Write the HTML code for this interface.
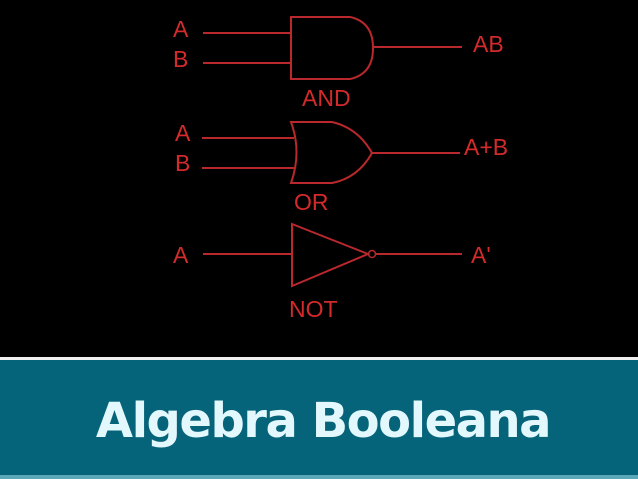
<!DOCTYPE html>
<html><head><style>
html,body{margin:0;padding:0;width:638px;height:479px;overflow:hidden;background:#000}
.bar{position:absolute;left:0;top:360px;width:638px;height:115px;background:#05637a}
.wl{position:absolute;left:0;top:357px;width:638px;height:3px;background:#f0f0f0}
.bl{position:absolute;left:0;top:475px;width:638px;height:4px;background:#5aa8b8}
.t{position:absolute;left:0;top:393px;width:646px;text-align:center;font:bold 48px "DejaVu Sans","Liberation Sans",sans-serif;color:#e2f8fc;letter-spacing:-1.5px}
svg{position:absolute;left:0;top:0}
text{font-family:"Liberation Sans",sans-serif;font-size:23px}
</style></head><body>
<svg width="638" height="357" viewBox="0 0 638 357">
<g stroke="#b8282c" stroke-width="2" fill="none">
<line x1="203" y1="33" x2="291" y2="33"/><line x1="203" y1="63" x2="291" y2="63"/>
<path d="M291 17 H350 Q373 22 373 48 Q373 74 350 79 H291 Z"/>
<line x1="373" y1="47" x2="462" y2="47"/>
<line x1="202" y1="138" x2="294" y2="138"/><line x1="202" y1="168" x2="294" y2="168"/>
<path d="M291 122 H332 Q358 128 372 153 Q358 178 332 183 H291 Q302 152 291 122 Z"/>
<line x1="372" y1="153" x2="460" y2="153"/>
<line x1="203" y1="254" x2="292" y2="254"/>
<path d="M292 224 L368 254 L292 286 Z"/>
<circle cx="372" cy="254" r="3.5" stroke-width="1.5"/>
<line x1="376" y1="254" x2="462" y2="254"/>
</g>
<g fill="#d42a2c">
<text x="173" y="37">A</text><text x="173" y="67">B</text>
<text x="473" y="52">AB</text><text x="302" y="106">AND</text>
<text x="175" y="141">A</text><text x="175" y="171">B</text>
<text x="464" y="155">A+B</text><text x="294" y="210">OR</text>
<text x="173" y="263">A</text><text x="471" y="263">A'</text>
<text x="289" y="317">NOT</text>
</g>
</svg>
<div class="wl"></div><div class="bar"></div><div class="bl"></div>
<div class="t">Algebra Booleana</div>
</body></html>
